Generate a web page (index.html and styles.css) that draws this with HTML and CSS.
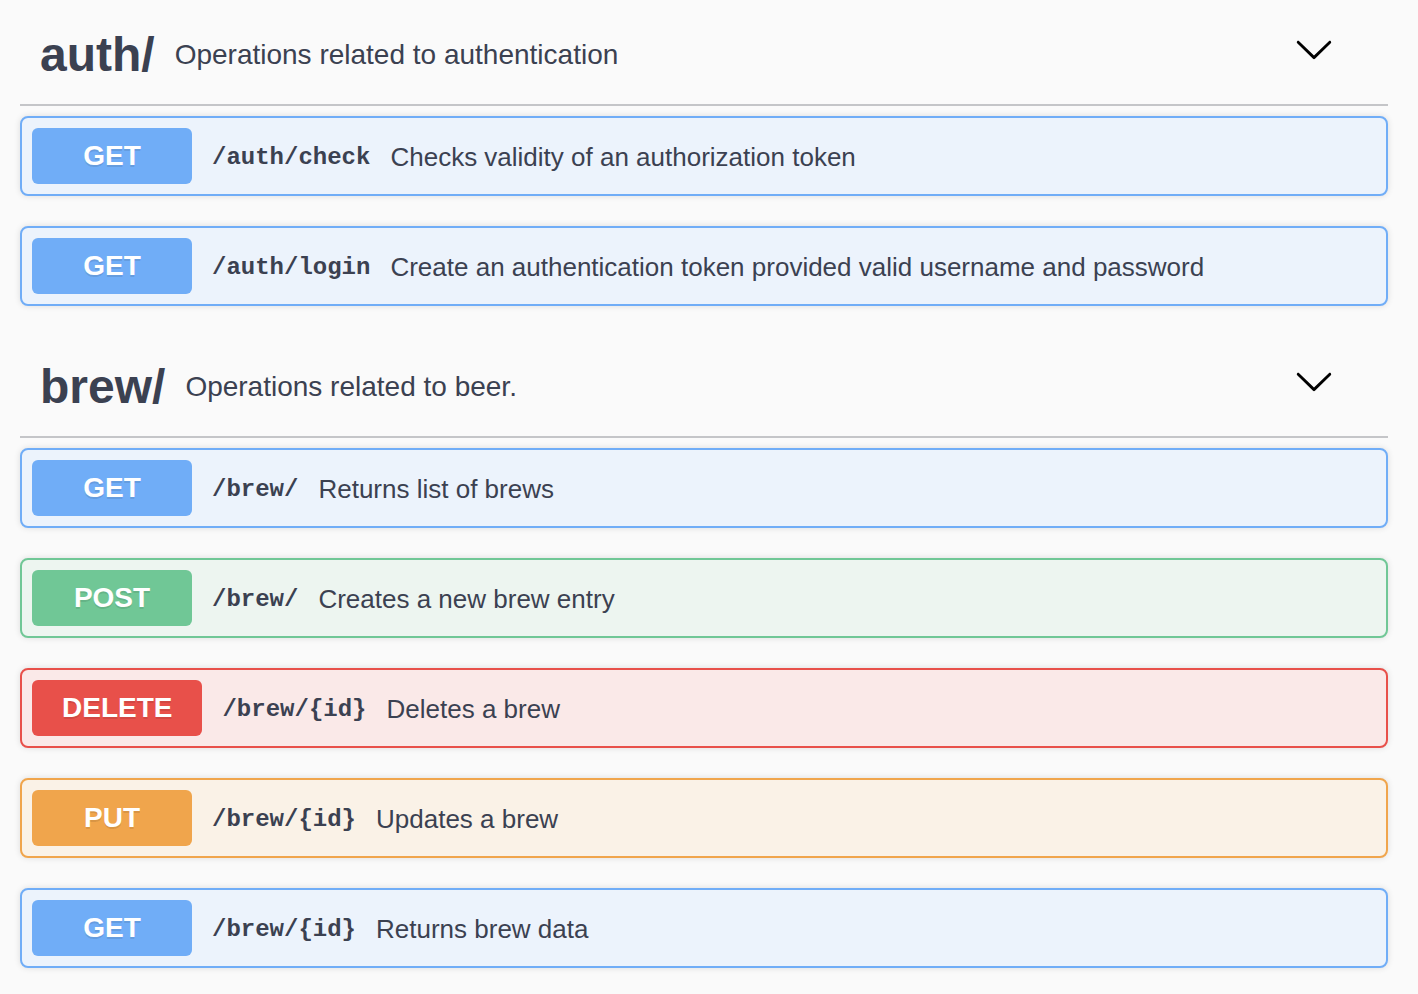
FILE: index.html
```html
<!DOCTYPE html>
<html>
<head>
<meta charset="utf-8">
<link rel="stylesheet" href="styles.css">
</head>
<body>
<div class="page">
  <section class="tag-section">
    <h4 class="tag">
      <span class="tag-name">auth/</span>
      <small class="tag-desc">Operations related to authentication</small>
      <span class="spacer"></span>
      <svg class="chevron" width="40" height="40" viewBox="0 0 20 20"><path d="M17.418 6.109c.272-.268.709-.268.979 0s.271.701 0 .969l-7.908 7.83c-.27.268-.707.268-.979 0l-7.908-7.83c-.27-.268-.27-.701 0-.969.271-.268.709-.268.979 0L10 13.25l7.418-7.141z"/></svg>
    </h4>
    <div class="ops">
      <div class="op get"><span class="method">GET</span><span class="path">/auth/check</span><span class="summary">Checks validity of an authorization token</span></div>
      <div class="op get"><span class="method">GET</span><span class="path">/auth/login</span><span class="summary">Create an authentication token provided valid username and password</span></div>
    </div>
  </section>
  <section class="tag-section">
    <h4 class="tag">
      <span class="tag-name">brew/</span>
      <small class="tag-desc">Operations related to beer.</small>
      <span class="spacer"></span>
      <svg class="chevron" width="40" height="40" viewBox="0 0 20 20"><path d="M17.418 6.109c.272-.268.709-.268.979 0s.271.701 0 .969l-7.908 7.83c-.27.268-.707.268-.979 0l-7.908-7.83c-.27-.268-.27-.701 0-.969.271-.268.709-.268.979 0L10 13.25l7.418-7.141z"/></svg>
    </h4>
    <div class="ops">
      <div class="op get"><span class="method">GET</span><span class="path">/brew/</span><span class="summary">Returns list of brews</span></div>
      <div class="op post"><span class="method">POST</span><span class="path">/brew/</span><span class="summary">Creates a new brew entry</span></div>
      <div class="op delete"><span class="method">DELETE</span><span class="path">/brew/{id}</span><span class="summary">Deletes a brew</span></div>
      <div class="op put"><span class="method">PUT</span><span class="path">/brew/{id}</span><span class="summary">Updates a brew</span></div>
      <div class="op get"><span class="method">GET</span><span class="path">/brew/{id}</span><span class="summary">Returns brew data</span></div>
    </div>
  </section>
</div>
</body>
</html>
```

FILE: styles.css
```css
html, body {
  margin: 0;
  padding: 0;
  background: #fafafa;
}
body {
  font-family: "Liberation Sans", Arial, sans-serif;
  color: #3b4151;
}
.page {
  width: 1368px;
  padding: 4px 0 0 20px;
}
.tag-section {
  margin-bottom: 30px;
}
.tag {
  display: flex;
  align-items: center;
  height: 100px;
  margin: 0 0 10px 0;
  padding: 0 0 0 20px;
  border-bottom: 2px solid #c4c5c8;
  font-weight: normal;
}
.tag-name {
  font-size: 48px;
  font-weight: bold;
  color: #3b4151;
}
.tag-desc {
  font-size: 28px;
  margin-left: 20px;
  padding-top: 2px;
  color: #3b4151;
}
.spacer {
  flex: 1;
}
.chevron {
  margin-right: 54px;
  margin-bottom: 10px;
  fill: #000;
}
.ops {
  display: flex;
  flex-direction: column;
  gap: 30px;
}
.op {
  display: flex;
  align-items: center;
  padding: 10px;
  border: 2px solid;
  border-radius: 8px;
  box-shadow: 0 0 6px rgba(0, 0, 0, 0.12);
}
.method {
  box-sizing: border-box;
  min-width: 160px;
  height: 56px;
  padding: 0 30px;
  display: flex;
  align-items: center;
  justify-content: center;
  border-radius: 6px;
  color: #fff;
  font-size: 28px;
  font-weight: bold;
  text-shadow: 0 2px 0 rgba(0, 0, 0, 0.1);
}
.path {
  font-family: "Liberation Mono", "Courier New", monospace;
  font-weight: bold;
  font-size: 24px;
  padding: 3px 20px 0 20px;
  color: #3b4151;
}
.summary {
  font-size: 26px;
  padding-top: 2px;
  color: #3b4151;
}
.get { background: #ecf3fc; border-color: #70adf7; }
.get .method { background: #70adf7; }
.post { background: #edf5f0; border-color: #70c796; }
.post .method { background: #70c796; }
.delete { background: #fae9e8; border-color: #e8504a; }
.delete .method { background: #e8504a; }
.put { background: #faf2e7; border-color: #f0a54c; }
.put .method { background: #f0a54c; }
```
